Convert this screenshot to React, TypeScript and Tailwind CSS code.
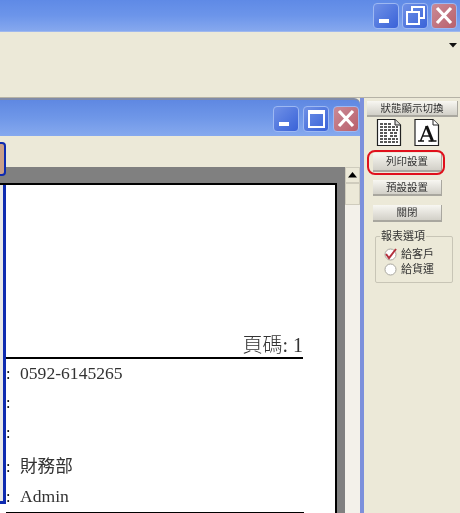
const cjk = "font-['Liberation_Sans','Noto_Sans_CJK_TC',sans-serif]";

function WinBtn({ kind, close }: { kind: "min" | "max" | "restore" | "close"; close?: boolean }) {
  return (
    <div
      className={`w-[26px] h-[26px] rounded-[4px] border border-[#9db8f2] flex items-center justify-center ${
        close ? "bg-gradient-to-br from-[#c98a96] to-[#b9606c]" : "bg-gradient-to-br from-[#6f90e6] to-[#3a62d8]"
      }`}
    >
      <svg width="24" height="24" viewBox="0 0 24 24">
        {kind === "min" && <rect x="5" y="15" width="10" height="4" fill="#fff" />}
        {kind === "max" && <path d="M5 4h15v16H5zM5 6h15" fill="none" stroke="#fff" strokeWidth="2" />}
        {kind === "restore" && (
          <g fill="none" stroke="#fff" strokeWidth="2">
            <path d="M9 7V3h12v11h-4" />
            <rect x="4" y="8" width="12" height="12" />
          </g>
        )}
        {kind === "close" && <path d="M5 4l14 15M19 4L5 19" stroke="#fff" strokeWidth="3.2" />}
      </svg>
    </div>
  );
}

function PanelBtn({ label, className }: { label: string; className: string }) {
  return (
    <div
      className={`flex items-center justify-center bg-gradient-to-b from-[#f8f7f2] to-[#d2d0c8] border-b-2 border-r border-[#a9a79f] text-[10.5px] leading-none text-[#333] ${className}`}
    >
      {label}
    </div>
  );
}

function DocIcon() {
  return (
    <svg width="26" height="29" viewBox="0 0 26 29">
      <path d="M1.5 1.5H19L24.5 7V27.5H1.5z" fill="#fff" stroke="#222" strokeWidth="1.2" />
      <path d="M19 1.5V7h5.5" fill="#ddd" stroke="#222" />
      <path d="M4 6h12M4 9h18M4 12h18M4 15h7M14 15h8M4 18h7M14 18h8M4 21h18M4 24h18" stroke="#222" strokeWidth="1.6" strokeDasharray="3 1" />
    </svg>
  );
}

function FontIcon() {
  return (
    <svg width="26" height="29" viewBox="0 0 26 29">
      <path d="M1 1.5H19L24.5 7V27.5H1z" fill="#fff" stroke="#222" strokeWidth="1.2" />
      <path d="M19 1.5V7h5.5" fill="#fff" stroke="#222" />
      <path d="M4 23h6M14.5 23h8M6.5 23l6-15" fill="none" stroke="#111" strokeWidth="1.4" />
      <path d="M12.5 8l6 15" fill="none" stroke="#111" strokeWidth="3" />
      <path d="M9 18h8" fill="none" stroke="#111" strokeWidth="1.4" />
    </svg>
  );
}

function Row({ text, className }: { text?: string; className: string }) {
  return (
    <div className={`flex items-baseline text-[#333] ${className}`}>
      <span className="w-[14px] text-black text-[16px]">:</span>
      {text && <span>{text}</span>}
    </div>
  );
}

export default function App() {
  return (
    <div className={`w-[460px] h-[513px] overflow-hidden flex flex-col bg-[#ece9d8] blur-[0.4px] ${cjk}`}>
      <div className="h-[32px] shrink-0 flex items-start justify-end gap-[3px] pt-[3px] pr-[3px] bg-gradient-to-b from-[#5f8ae6] via-[#6c95ea] to-[#86a8ee] border-b border-[#9fb8ee]">
        <WinBtn kind="min" />
        <WinBtn kind="restore" />
        <WinBtn kind="close" close />
      </div>
      <div className="h-[66px] shrink-0 flex justify-end pr-[3px] pt-[11px] bg-[#ece9d8] border-b border-[#b5b2a6]">
        <svg width="8" height="6" viewBox="0 0 8 6">
          <path d="M0 0h8L4 4.5z" fill="#111" />
        </svg>
      </div>
      <div className="flex-1 flex min-h-0">
        <div className="w-[364px] shrink-0 flex flex-col border-r-4 border-[#7c90dc]">
          <div className="h-[38px] shrink-0 flex justify-end gap-[4px] pt-[6px] pr-[1px] bg-gradient-to-b from-[#5f88e2] via-[#6f97e8] to-[#86a9ee] rounded-tr-[6px] border-t-2 border-[#808ba8]">
            <WinBtn kind="min" />
            <WinBtn kind="max" />
            <WinBtn kind="close" close />
          </div>
          <div className="flex-1 flex min-h-0">
            <div className="w-[345px] shrink-0 flex flex-col">
              <div className="h-[31px] shrink-0 bg-[#ece9d8] relative">
                <div className="absolute left-[-4px] top-[6px] w-[10px] h-[34px] rounded-[4px] border-2 border-[#0e2bb0] bg-[#c9a08a] z-10" />
              </div>
              <div className="h-[16px] shrink-0 bg-[#808080]" />
              <div className="flex-1 flex min-h-0">
                <div className="w-[337px] shrink-0 bg-white border-t-2 border-r-2 border-black flex flex-col text-[#333] min-h-0">
                  <div className="flex min-h-0 flex-1">
                    <div className="w-[6px] shrink-0 h-[319px] bg-[#e8e8e8] border-r-[3px] border-b-[3px] border-[#0e2bb0]" />
                    <div className="flex-1 flex flex-col">
                      <div className="h-[174px] shrink-0 w-[297px] flex items-end justify-end border-b-2 border-black text-[20px] leading-[24px] font-['Liberation_Serif','Noto_Sans_CJK_TC',serif] font-light">
                        頁碼: 1
                      </div>
                      <div className="w-[298px] flex flex-col font-['Liberation_Serif','Noto_Sans_CJK_TC',serif] text-[17.6px] leading-[24px] pt-[2px]">
                        <Row text="0592-6145265" className="h-[30px]" />
                        <Row className="h-[30px]" />
                        <Row className="h-[33px]" />
                        <Row text="財務部" className="h-[30px]" />
                        <Row text="Admin" className="h-[28px]" />
                      </div>
                      <div className="w-[298px] h-[2px] bg-black" />
                    </div>
                  </div>
                </div>
                <div className="flex-1 bg-[#808080]" />
              </div>
            </div>
            <div className="flex-1 flex flex-col">
              <div className="h-[16px] shrink-0 bg-[#ece9d8] mt-[31px] flex items-center justify-center border border-[#cfccbd]">
                <svg width="9" height="6" viewBox="0 0 9 6">
                  <path d="M0 5.5h9L4.5 0z" fill="#000" />
                </svg>
              </div>
              <div className="h-[22px] shrink-0 bg-[#ece9d8] border border-[#cfccbd]" />
              <div className="flex-1 bg-[#f3f1ea]" />
            </div>
          </div>
        </div>
        <div className="flex-1 flex flex-col relative pl-[3px] pt-[3px]">
          <PanelBtn label="狀態顯示切換" className="w-[91px] h-[16px]" />
          <div className="flex justify-start gap-[12px] pl-[9px] pt-[1px] h-[36px]">
            <DocIcon />
            <FontIcon />
          </div>
          <div className="flex flex-col pl-[6px]">
            <PanelBtn label="列印設置" className="w-[69px] h-[19px]" />
            <PanelBtn label="預設設置" className="w-[69px] h-[16px] mt-[8px]" />
            <PanelBtn label="關閉" className="w-[69px] h-[17px] mt-[9px]" />
          </div>
          <div className="relative ml-[8px] mt-[14px] w-[78px] h-[47px] border border-[#c8c5b6] rounded-[2px] pl-[8px] pt-[10px] text-[11px] leading-[15px] text-[#333]">
            <div className="absolute left-[4px] top-[-7px] bg-[#ece9d8] px-[1px] text-[11px] leading-[13px]">報表選項</div>
            <div className="flex items-center gap-[4px] h-[15px]">
              <svg width="13" height="13" viewBox="0 0 13 13">
                <circle cx="6.5" cy="6.5" r="5.5" fill="#fff" stroke="#a9a79f" />
                <path d="M2 6l3 4 7-9" fill="none" stroke="#b3303c" strokeWidth="2" />
              </svg>
              給客戶
            </div>
            <div className="flex items-center gap-[4px] h-[15px]">
              <svg width="13" height="13" viewBox="0 0 13 13">
                <circle cx="6.5" cy="6.5" r="5.5" fill="#fff" stroke="#a9a79f" />
              </svg>
              給貨運
            </div>
          </div>
          <div className="absolute left-[3px] top-[52px] w-[78px] h-[25px] rounded-[8px] border-[2.5px] border-[#e0101c]" />
        </div>
      </div>
    </div>
  );
}
